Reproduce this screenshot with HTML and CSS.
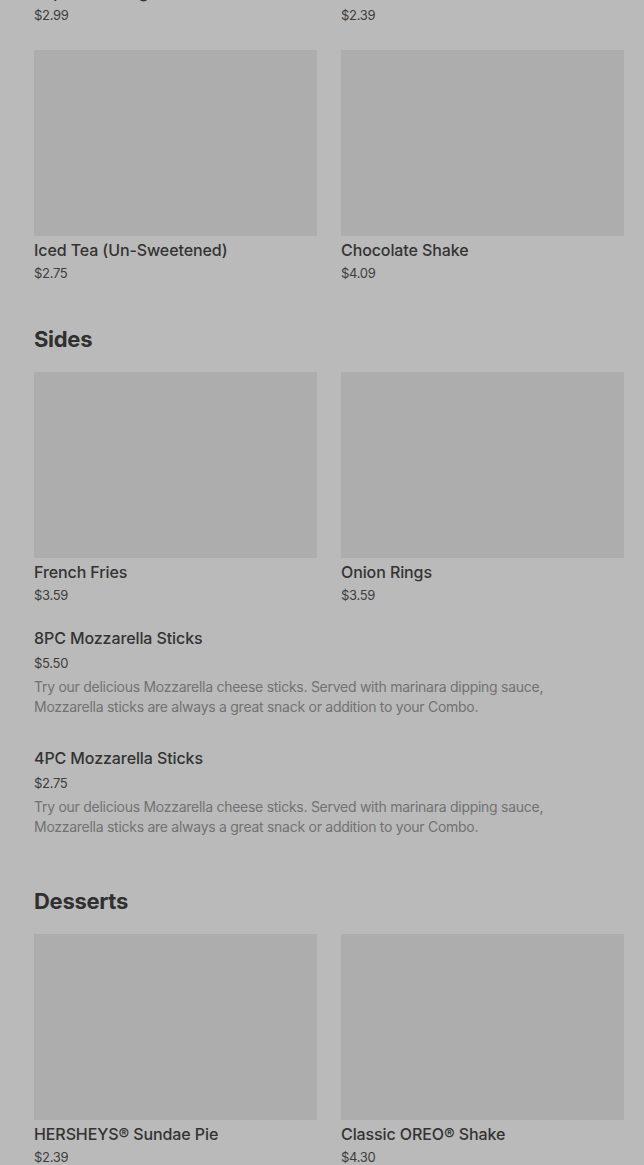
FILE: index.html
```html
<!DOCTYPE html>
<html lang="en">
<head>
<meta charset="utf-8">
<title>Menu</title>
<link rel="stylesheet" href="styles.css">
</head>
<body>
<main class="menu">
  <section class="section">
    <div class="grid">
      <div class="card">
        <div class="thumb"></div>
        <div class="name">Pepsi Zero Sugar</div>
        <div class="price">$2.99</div>
      </div>
      <div class="card">
        <div class="thumb"></div>
        <div class="name">Mountain Dew</div>
        <div class="price">$2.39</div>
      </div>
      <div class="card">
        <div class="thumb"></div>
        <div class="name">Iced Tea (Un-Sweetened)</div>
        <div class="price">$2.75</div>
      </div>
      <div class="card">
        <div class="thumb"></div>
        <div class="name">Chocolate Shake</div>
        <div class="price">$4.09</div>
      </div>
    </div>
  </section>

  <section class="section">
    <h2 class="heading">Sides</h2>
    <div class="grid">
      <div class="card">
        <div class="thumb"></div>
        <div class="name">French Fries</div>
        <div class="price">$3.59</div>
      </div>
      <div class="card">
        <div class="thumb"></div>
        <div class="name">Onion Rings</div>
        <div class="price">$3.59</div>
      </div>
    </div>
    <div class="list">
      <div class="row">
        <div class="name">8PC Mozzarella Sticks</div>
        <div class="price">$5.50</div>
        <p class="desc">Try our delicious Mozzarella cheese sticks. Served with marinara dipping sauce, Mozzarella sticks are always a great snack or addition to your Combo.</p>
      </div>
      <div class="row">
        <div class="name">4PC Mozzarella Sticks</div>
        <div class="price">$2.75</div>
        <p class="desc">Try our delicious Mozzarella cheese sticks. Served with marinara dipping sauce, Mozzarella sticks are always a great snack or addition to your Combo.</p>
      </div>
    </div>
  </section>

  <section class="section">
    <h2 class="heading">Desserts</h2>
    <div class="grid">
      <div class="card">
        <div class="thumb"></div>
        <div class="name">HERSHEYS® Sundae Pie</div>
        <div class="price">$2.39</div>
      </div>
      <div class="card">
        <div class="thumb"></div>
        <div class="name">Classic OREO® Shake</div>
        <div class="price">$4.30</div>
      </div>
    </div>
  </section>
</main>
</body>
</html>
```
FILE: styles.css
```css
html, body {
  margin: 0;
  padding: 0;
  background: #bababa;
  overflow: hidden;
}
body {
  font-family: Inter, "Noto Sans", "Liberation Sans", sans-serif;
  color: #333333;
}
.menu {
  margin-top: -208px;
  padding: 0 20px 0 34px;
  display: flex;
  flex-direction: column;
  gap: 40px;
}
.section {
  display: flex;
  flex-direction: column;
}
.heading {
  margin: 0 0 17px;
  font-size: 22px;
  line-height: 32px;
  font-weight: 700;
  color: #303030;
  letter-spacing: -0.3px;
}
.grid {
  display: grid;
  grid-template-columns: 1fr 1fr;
  column-gap: 24px;
  row-gap: 25px;
}
.thumb {
  height: 186px;
  background: #adadad;
  margin-bottom: 4px;
}
.name {
  font-size: 16px;
  line-height: 20px;
  font-weight: 500;
  color: #333333;
  letter-spacing: -0.1px;
}
.price {
  margin-top: 3px;
  font-size: 13px;
  line-height: 20px;
  color: #3d3d3d;
  letter-spacing: -0.3px;
}
.list {
  margin-top: 23px;
  display: flex;
  flex-direction: column;
  gap: 23px;
}
.row {
  padding-bottom: 8px;
}
.row .price {
  margin-top: 5px;
}
.desc {
  margin: 4px 0 0;
  max-width: 540px;
  font-size: 14px;
  line-height: 20px;
  color: #727272;
  letter-spacing: -0.27px;
}
```
